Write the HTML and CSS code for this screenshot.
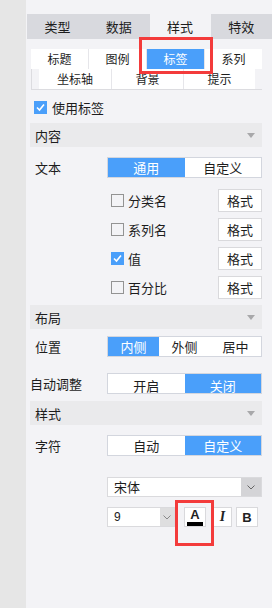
FILE: index.html
```html
<!DOCTYPE html>
<html lang="zh-CN">
<head>
    <meta charset="UTF-8">
    <meta name="viewport" content="width=device-width, initial-scale=1.0">
    <title>标签样式</title>
    <link rel="stylesheet" href="styles.css">
</head>
<body>
    <div class="sidebar"></div>
    <div class="panel">
        <div class="tabs">
            <div class="tab">类型</div>
            <div class="tab">数据</div>
            <div class="tab active">样式</div>
            <div class="tab">特效</div>
        </div>

        <div class="content">
            <div class="subtabs">
                <div class="subtab-row first">
                    <div class="subtab">标题</div>
                    <div class="subtab">图例</div>
                    <div class="subtab active">标签</div>
                    <div class="subtab">系列</div>
                </div>
                <div class="subtab-row second">
                    <div class="subtab">坐标轴</div>
                    <div class="subtab">背景</div>
                    <div class="subtab">提示</div>
                </div>
            </div>

            <label class="check use-label">
                <span class="box checked"><svg width="11" height="11" viewBox="0 0 11 11"><polyline points="2,5.5 4.5,8 9,2.5" fill="none" stroke="#fff" stroke-width="1.6"/></svg></span>
                使用标签
            </label>

            <!-- 内容 -->
            <div class="section-head gap-8">内容<span class="caret"></span></div>
            <div class="field gap-10">
                <span class="field-label">文本</span>
                <div class="seg">
                    <span class="on">通用</span>
                    <span>自定义</span>
                </div>
            </div>
            <div class="options">
                <div class="option">
                    <span class="box"></span><span class="option-name">分类名</span>
                    <button class="btn-format">格式</button>
                </div>
                <div class="option">
                    <span class="box"></span><span class="option-name">系列名</span>
                    <button class="btn-format">格式</button>
                </div>
                <div class="option">
                    <span class="box checked"><svg width="11" height="11" viewBox="0 0 11 11"><polyline points="2,5.5 4.5,8 9,2.5" fill="none" stroke="#fff" stroke-width="1.6"/></svg></span><span class="option-name">值</span>
                    <button class="btn-format">格式</button>
                </div>
                <div class="option">
                    <span class="box"></span><span class="option-name">百分比</span>
                    <button class="btn-format">格式</button>
                </div>
            </div>

            <!-- 布局 -->
            <div class="section-head gap-6">布局<span class="caret"></span></div>
            <div class="field gap-7">
                <span class="field-label">位置</span>
                <div class="seg">
                    <span class="on">内侧</span>
                    <span>外侧</span>
                    <span>居中</span>
                </div>
            </div>
            <div class="field gap-16">
                <span class="field-label wide">自动调整</span>
                <div class="seg low">
                    <span>开启</span>
                    <span class="on">关闭</span>
                </div>
            </div>

            <!-- 样式 -->
            <div class="section-head gap-7">样式<span class="caret"></span></div>
            <div class="field gap-10">
                <span class="field-label">字符</span>
                <div class="seg">
                    <span>自动</span>
                    <span class="on">自定义</span>
                </div>
            </div>
            <div class="select font-family">
                <span class="select-value">宋体</span>
                <span class="select-arrow"><svg width="8" height="5" viewBox="0 0 8 5"><polyline points="0.5,0.5 4,4 7.5,0.5" fill="none" stroke="#666" stroke-width="1"/></svg></span>
            </div>
            <div class="font-tools">
                <div class="select size-select">
                    <span class="select-value num">9</span>
                    <span class="select-arrow"><svg width="8" height="5" viewBox="0 0 8 5"><polyline points="0.5,0.5 4,4 7.5,0.5" fill="none" stroke="#888" stroke-width="1"/></svg></span>
                </div>
                <button class="tool tool-color"><span class="glyph-a">A</span><span class="color-bar"></span></button>
                <button class="tool tool-italic">I</button>
                <button class="tool tool-bold">B</button>
            </div>
        </div>

        <div class="mark mark-tab"></div>
        <div class="mark mark-color"></div>
    </div>
</body>
</html>
```

FILE: styles.css
```css
:root {
    --blue: #4a9ffa;
    --panel: #f3f3f6;
    --line: #d8d9de;
    --mark: #f33b3b;
}

* {
    box-sizing: border-box;
}

body {
    margin: 0;
    height: 608px;
    display: flex;
    background-color: #e6e6e6;
    font-family: "Noto Sans CJK SC", "Noto Sans", sans-serif;
    font-size: 12px;
    color: #1d1d1d;
}

.sidebar {
    width: 26px;
    flex: none;
}

.panel {
    flex: 1;
    position: relative;
    background-color: var(--panel);
    padding-top: 14px;
}

/* top tabs */
.tabs {
    display: flex;
    height: 25px;
    margin-left: 1px;
}

.tab {
    flex: 1;
    display: flex;
    align-items: center;
    justify-content: center;
    background-color: #d8d9de;
    font-size: 13px;
}

.tab.active {
    background-color: var(--panel);
}

.content {
    padding: 0 10px 0 4px;
}

/* sub tabs */
.subtabs {
    margin: 10px 0 0 1px;
}

.subtab-row {
    display: flex;
    height: 20px;
}

.subtab {
    display: flex;
    align-items: center;
    justify-content: center;
    background-color: #fff;
    line-height: 1;
}

.subtab-row.first .subtab {
    flex: 1;
    border-left: 1px solid #e6e6ea;
}

.subtab-row.first .subtab:first-child {
    border-left: none;
}

.subtab.active {
    background-color: var(--blue);
    color: #fff;
}

.subtab-row.second {
    height: 21px;
    justify-content: center;
    border-left: 1px solid #dcdce0;
    border-bottom: 1px solid #dcdce0;
}

.subtab-row.second .subtab {
    width: 72px;
    border-left: 1px solid #e6e6ea;
}

.subtab-row.second .subtab:first-child {
    border-left: none;
}

/* checkbox */
.check {
    display: flex;
    align-items: center;
    gap: 5px;
}

.use-label {
    height: 16px;
    margin-top: 9px;
    padding-left: 4px;
    font-size: 13px;
}

.box {
    width: 13px;
    height: 13px;
    flex: none;
    display: flex;
    align-items: center;
    justify-content: center;
    border: 1px solid #939393;
}

.box.checked {
    border-color: var(--blue);
    background-color: var(--blue);
}

/* section header */
.section-head {
    height: 24px;
    display: flex;
    align-items: center;
    justify-content: space-between;
    padding: 0 7px 0 5px;
    background-color: #eaeaec;
    font-size: 13px;
}

.caret {
    width: 0;
    height: 0;
    border-left: 4px solid transparent;
    border-right: 4px solid transparent;
    border-top: 5px solid #a8a8aa;
}

.gap-6 { margin-top: 6px; }
.gap-7 { margin-top: 7px; }
.gap-8 { margin-top: 8px; }
.gap-10 { margin-top: 10px; }
.gap-16 { margin-top: 16px; }

/* label + segmented */
.field {
    display: flex;
    align-items: center;
    padding-left: 5px;
}

.field-label {
    width: 72px;
    flex: none;
    font-size: 13px;
}

.field-label.wide {
    margin-left: -5px;
    width: 77px;
}

.seg {
    flex: 1;
    display: flex;
    height: 21px;
    border: 1px solid #d3d6de;
    background-color: #fff;
}

.seg span {
    flex: 1;
    text-align: center;
    line-height: 19px;
    font-size: 13px;
}

.seg.low span {
    line-height: 23px;
}

.seg .on {
    background-color: var(--blue);
    color: #fff;
}

/* option rows */
.options {
    margin-top: 11px;
    padding-left: 81px;
    display: flex;
    flex-direction: column;
    gap: 6px;
}

.option {
    height: 23px;
    display: flex;
    align-items: center;
}

.option-name {
    margin-left: 4px;
    font-size: 13px;
}

.btn-format {
    margin-left: auto;
    width: 44px;
    height: 23px;
    padding: 0;
    border: 1px solid #d9d9dc;
    background-color: #fff;
    font-family: inherit;
    font-size: 13px;
    color: #1d1d1d;
}

/* selects */
.select {
    display: flex;
    height: 20px;
    border: 1px solid #dadadd;
    background-color: #fff;
}

.font-family {
    margin: 21px 0 0 77px;
}

.select-value {
    flex: 1;
    padding-left: 6px;
    line-height: 18px;
    font-size: 13px;
}

.select-value.num {
    font-family: "Liberation Sans", Arial, sans-serif;
    font-size: 12px;
    color: #222;
}

.select-arrow {
    width: 20px;
    display: flex;
    align-items: center;
    justify-content: center;
    background-color: #d4d4d7;
}

.font-tools {
    display: flex;
    height: 20px;
    margin: 10px 0 0 77px;
}

.size-select {
    width: 68px;
}

.size-select .select-arrow {
    width: 14px;
    background-color: #dededf;
}

.tool {
    height: 20px;
    padding: 0;
    border: 1px solid #d9d9dc;
    background-color: #fff;
    font-family: "Liberation Sans", Arial, sans-serif;
    font-weight: bold;
    color: #222;
}

.tool-color {
    width: 22px;
    margin-left: 9px;
    display: flex;
    flex-direction: column;
    align-items: center;
    padding-top: 1px;
}

.glyph-a {
    font-size: 13px;
    line-height: 12px;
}

.color-bar {
    width: 16px;
    height: 4px;
    margin-top: 1px;
    background-color: #000;
}

.tool-italic {
    width: 19px;
    margin-left: 7px;
    font-family: "Liberation Serif", serif;
    font-style: italic;
    font-size: 14px;
}

.tool-bold {
    width: 22px;
    margin-left: 4px;
    font-size: 13px;
}

/* red annotation boxes */
.mark {
    position: absolute;
    border: 3px solid var(--mark);
}

.mark-tab {
    left: 113px;
    top: 37px;
    width: 74px;
    height: 37px;
}

.mark-color {
    left: 149px;
    top: 500px;
    width: 39px;
    height: 46px;
}
```
